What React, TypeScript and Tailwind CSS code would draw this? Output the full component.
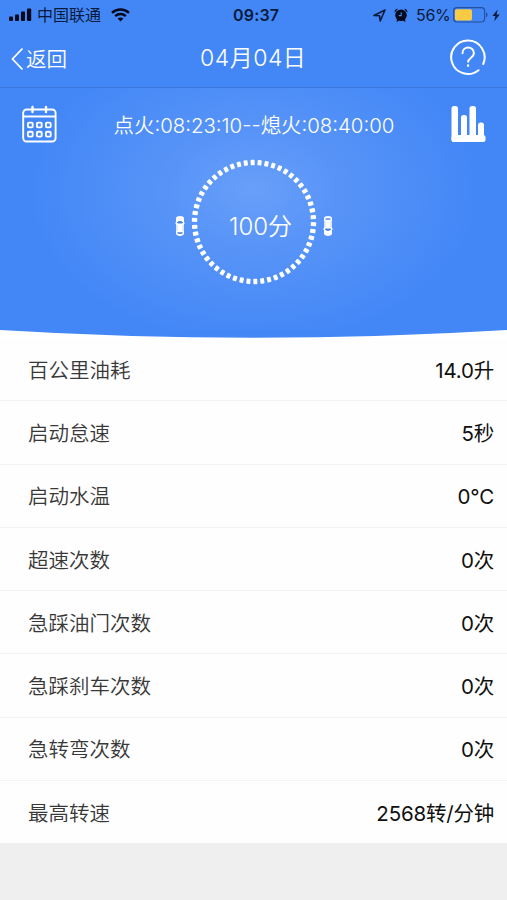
const ROWS = [
  { label: "百公里油耗", value: "14.0升" },
  { label: "启动怠速", value: "5秒" },
  { label: "启动水温", value: "0°C" },
  { label: "超速次数", value: "0次" },
  { label: "急踩油门次数", value: "0次" },
  { label: "急踩刹车次数", value: "0次" },
  { label: "急转弯次数", value: "0次" },
  { label: "最高转速", value: "2568转/分钟" },
];

const DOTS = Array.from({ length: 54 }, (_, i) => (i * 360) / 54 - 1.3);

function StatusBar() {
  return (
    <div className="relative flex h-[30px] items-center justify-between pl-[9px] pr-[7px] text-[16px] leading-none text-[#0a1a3c]">
      <div className="flex items-center">
        <svg width="23" height="14" viewBox="0 0 23 14" fill="#04091c">
          <rect x="0" y="8.5" width="4" height="4.5" rx="1" />
          <rect x="6" y="6.5" width="4" height="6.5" rx="1" />
          <rect x="12" y="3.5" width="4" height="9.5" rx="1" />
          <rect x="18" y="0.5" width="4.2" height="12.5" rx="1" />
        </svg>
        <span className="ml-[5px]">中国联通</span>
        <svg className="ml-[10px]" width="19" height="14" viewBox="0 0 19 14" fill="none" stroke="#04091c" strokeWidth="2.5">
          <path d="M1 4.8C5.8.3 13.2.3 18 4.8" />
          <path d="M4.2 8.1c3-2.8 7.6-2.8 10.6 0" />
          <path d="M9.5 13.6 6.6 10.6c1.7-1.5 4.1-1.5 5.8 0z" fill="#04091c" stroke="none" />
        </svg>
      </div>
      <span className="absolute left-[233px] top-[7px] text-[16px] font-semibold tracking-[0.2px]">09:37</span>
      <div className="flex items-center">
        <svg width="13" height="13" viewBox="0 0 13 13" fill="none" stroke="#0a1a3c" strokeWidth="1.6" strokeLinejoin="round">
          <path d="M1 6.5 12 1 7.2 12 6.5 6.7z" />
        </svg>
        <svg className="ml-[8px]" width="14" height="14" viewBox="0 0 14 14" fill="#04091c">
          <circle cx="7" cy="7.3" r="5.8" />
          <path d="M.6 3.9C.7 1.8 2 .8 4 .8L.9 4.5zM13.4 3.9C13.3 1.8 12 .8 10 .8l3.1 3.7zM2.2 13.3l1.6-2.2 1.2 1-1.6 1.7zM11.8 13.3l-1.6-2.2-1.2 1 1.6 1.7z" />
          <path d="M7.2 4.2v3.4H4.8" fill="none" stroke="#4588f6" strokeWidth="1.1" />
        </svg>
        <span className="ml-[8px] w-[34px] text-[16px] tracking-[-0.3px]">56%</span>
        <svg className="ml-[3px]" width="36" height="16" viewBox="0 0 36 16">
          <rect x="0.6" y="0.6" width="31" height="14.4" rx="3.4" fill="none" stroke="#234f9f" strokeWidth="1.2" />
          <rect x="2" y="2.2" width="17" height="11.2" rx="1.6" fill="#f9cb45" />
          <path d="M33 5.2c2 .8 2 4.4 0 5.2z" fill="#234f9f" />
        </svg>
        <svg className="ml-[3px]" width="8" height="13" viewBox="0 0 8 13" fill="#0a1a3c">
          <path d="M5.7.5.4 7h3L2.3 12.3 7.7 5.5H4.5z" />
        </svg>
      </div>
    </div>
  );
}

function NavBar() {
  return (
    <div className="relative flex h-[58px] items-center justify-between border-b border-[#3b78df] pl-[11px] pr-[20px] text-white">
      <div className="flex items-center font-[350]">
        <svg width="13" height="24" viewBox="0 0 13 24" fill="none" stroke="#fff" strokeWidth="1.8">
          <path d="M11.5 1.5 1.5 12l10 10.5" />
        </svg>
        <span className="ml-[2px] pt-[3px] text-[20.5px] leading-none">返回</span>
      </div>
      <h1 className="absolute left-[200px] top-[15px] whitespace-nowrap text-[23px] font-[350] leading-[26px] tracking-[0.5px]">04月04日</h1>
      <svg className="-mt-[3px]" width="38" height="38" viewBox="0 0 38 38" fill="none" stroke="#fff" strokeWidth="2" strokeLinecap="round">
        <path d="M29.5 32.2A16.7 16.7 0 1 1 34.2 26" />
        <path d="M13.5 15.2c0-7.4 11.4-7.5 11.4 0 0 4.8-5.7 4.8-5.7 8.6" />
        <path d="M19.1 27.5v.3" strokeWidth="2.3" />
      </svg>
    </div>
  );
}

function Car({ flip = false }: { flip?: boolean }) {
  return (
    <svg className={flip ? "rotate-180" : ""} width="10" height="22" viewBox="0 0 10 22">
      <path d="M1 3.5C1 .3 9 .3 9 3.5V18.5C9 21.7 1 21.7 1 18.5z" fill="#fff" />
      <path d="M.3 7.5h9.4v1.2H.3z" fill="#fff" />
      <path d="M1.900 7.2c1.8-1.500 4.400-1.500 6.200 0l-.9 1.400H2.800zM2.700 17.200h4.600l.7 1c-1.800.9-4.200.9-6 0z" fill="#4a82dc" />
      <path d="M1.9 9.8v6.4M8.1 9.8v6.4" stroke="#8db5fa" strokeWidth=".6" />
    </svg>
  );
}

function ScoreRing() {
  return (
    <div className="relative flex h-[126px] w-[126px] items-center justify-center">
      <svg className="absolute inset-0" width="126" height="126" viewBox="0 0 126 126" fill="#fff">
        {DOTS.map((deg) => (
          <rect key={deg} x="61" y="0.8" width="4" height="5.4" rx="0.7" transform={`rotate(${deg} 63 63)`} />
        ))}
      </svg>
      <span className="relative left-[7px] top-[5px] whitespace-nowrap text-[24px] font-[350] leading-none">100分</span>
    </div>
  );
}

function Summary() {
  return (
    <div className="flex h-[242px] flex-col bg-[radial-gradient(ellipse_225px_155px_at_254px_102px,#689ff9_0%,#5b96f8_30%,#4e8ef7_65%,#4387f6_100%)] text-white">
      <div className="flex h-[71px] items-center justify-between pl-[22px] pr-[21px]">
        <svg width="35" height="38" viewBox="0 0 35 38" fill="none" stroke="#fff" strokeWidth="1.9">
          <rect x="1.2" y="4.5" width="32.4" height="32" rx="3.5" />
          <path d="M1.2 11.5h32.4" />
          <path d="M10.5 2v5M24 2v5" strokeWidth="2.4" strokeLinecap="round" />
          {[8.3, 17.3, 26.3].map((x) => (
            <g key={x}>
              <rect x={x - 2.4} y="17.6" width="4.8" height="4.8" rx="1.2" />
              <rect x={x - 2.4} y="26.8" width="4.8" height="4.8" rx="1.2" />
            </g>
          ))}
        </svg>
        <span className="whitespace-nowrap pt-[5px] text-[20.4px] font-[350] leading-none">点火:08:23:10--熄火:08:40:00</span>
        <svg width="35" height="36" viewBox="0 0 35 36" fill="#fff">
          <rect x="0.5" y="0" width="6.5" height="36" rx="2.5" />
          <rect x="10" y="9" width="6" height="25" rx="2.5" />
          <rect x="18.5" y="0" width="6.5" height="34" rx="2.5" />
          <rect x="27" y="16.5" width="6" height="18" rx="2.5" />
          <rect x="0.5" y="29" width="34" height="7" rx="2.5" />
        </svg>
      </div>
      <div className="flex items-center justify-center gap-[6px]">
        <div className="pt-[7px]"><Car /></div>
        <ScoreRing />
        <div className="pt-[7px]"><Car flip /></div>
      </div>
    </div>
  );
}

export default function App() {
  return (
    <div className="flex h-[900px] w-[507px] flex-col overflow-hidden bg-[#efefef] font-['Inter','Noto_Sans_CJK_SC',sans-serif]">
      <header className="shrink-0 bg-[#4387f6]">
        <StatusBar />
        <NavBar />
        <Summary />
        <svg className="block" width="507" height="8" viewBox="0 0 507 8">
          <path d="M0 0Q253.5 15.5 507 0V8H0z" fill="#fff" />
        </svg>
      </header>
      <ul className="flex h-[505px] shrink-0 flex-col bg-[#fefefe]">
        {ROWS.map((row) => (
          <li key={row.label} className="flex flex-1 items-center justify-between border-b border-[#f3f3f3] pl-[28px] pr-[13px] pt-[4px] text-[20.5px] leading-none last:border-b-0">
            <span className="font-[350] text-[#383838]">{row.label}</span>
            <span className="font-[390] tracking-[-0.2px] text-[#101010]">{row.value}</span>
          </li>
        ))}
      </ul>
    </div>
  );
}
